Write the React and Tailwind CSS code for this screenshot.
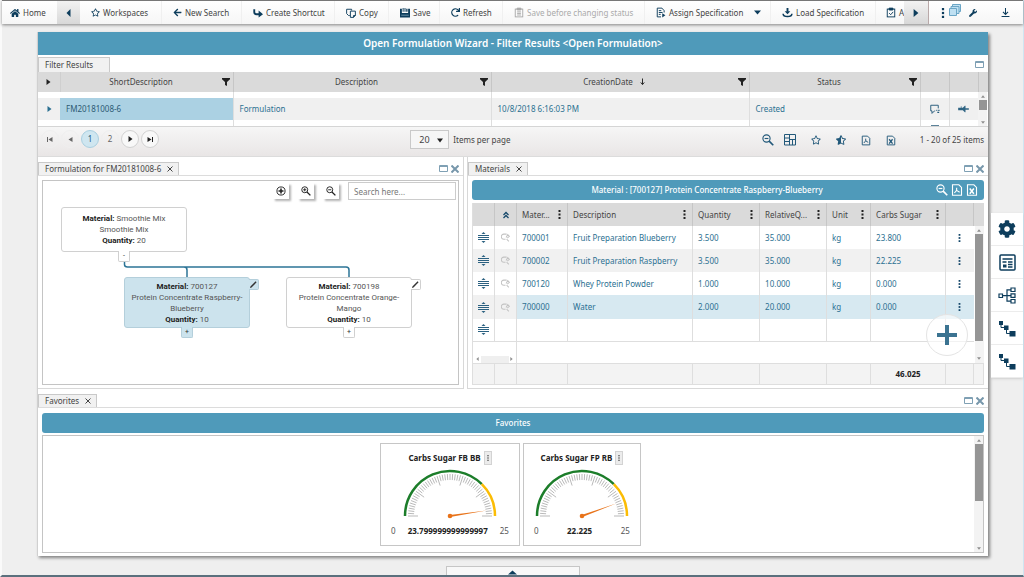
import {
  FaHome,
  FaRegStar,
  FaStarHalfAlt,
  FaArrowLeft,
  FaRedo,
  FaWrench,
  FaCog,
} from "react-icons/fa";

/* ---------- icons ---------- */

const Svg = ({ className = "w-3 h-3", box = "0 0 16 16", children }) => (
  <svg className={className} viewBox={box} fill="none" stroke="currentColor" strokeWidth="1.5">
    {children}
  </svg>
);

const Tri = ({ dir, className = "w-[6px] h-[6px]" }) => {
  const d = {
    up: "M0 9L5 1L10 9Z",
    down: "M0 1L5 9L10 1Z",
    left: "M9 0L1 5L9 10Z",
    right: "M1 0L9 5L1 10Z",
  };
  return (
    <svg className={className} viewBox="0 0 10 10" preserveAspectRatio="none" fill="currentColor">
      <path d={d[dir]} />
    </svg>
  );
};

const ShortcutIcon = () => (
  <Svg className="w-[10px] h-[10px]">
    <path d="M2 2v4.500c0 3 1.500 3.500 3.500 3.500H10" strokeWidth="3" />
    <path d="M9 4l7 6l-7 5z" fill="currentColor" stroke="none" />
  </Svg>
);

const CopyIcon = () => (
  <Svg className="w-[10px] h-[10px]">
    <path d="M6 12H4L1 9V2h8v2" />
    <path d="M7 5h8v7l-3 3H7z M12 15v-3h3" />
  </Svg>
);

const SaveIcon = () => (
  <Svg className="w-[10px] h-[10px]">
    <path d="M0 1h3v7h10V1h3v14H0z" fill="currentColor" stroke="none" />
    <path d="M5 0v6M8 0v6" strokeWidth="1.500" />
    <path d="M10 1h2v5h-2z" fill="currentColor" stroke="none" />
    <path d="M2 11.500h12" stroke="#9fc0d4" strokeWidth="1" />
  </Svg>
);

const ClipIcon = ({ check }) => (
  <Svg className="w-[10px] h-[11px]">
    <rect x="2" y="2.500" width="12" height="12.500" />
    <path d="M5 1h6v3H5z" fill="currentColor" />
    {check ? <path d="M5 9l2.500 2.500L11.500 7" /> : <path d="M5 7h6M5 9.500h6M5 12h6" />}
  </Svg>
);

const AssignIcon = () => (
  <Svg className="w-[10px] h-[11px]">
    <path d="M13 8V5L9.500 1H2v14h6" />
    <path d="M4.500 5h4M4.500 8h6M4.500 11h3" />
    <path d="M10 9l5 3.500l-5 3.500z" fill="currentColor" stroke="none" />
  </Svg>
);

const LoadIcon = () => (
  <Svg className="w-[11px] h-[10px]">
    <path d="M8 0v6" strokeWidth="3" />
    <path d="M3.500 5h9L8 10z" fill="currentColor" stroke="none" />
    <path d="M1 9c0 6 14 6 14 0" strokeWidth="2.500" />
  </Svg>
);

const FilterIcon = () => (
  <svg className="w-[8px] h-[8px] text-[#222]" viewBox="0 0 16 16" fill="currentColor">
    <path d="M0 0h16v2.500L10 8v8l-4-2V8L0 2.500z" />
  </svg>
);

const DotsIcon = ({ className = "w-[3px] h-[9px]" }) => (
  <svg className={className} viewBox="0 0 3 9" fill="currentColor">
    <rect x="0.500" y="0" width="2" height="2" />
    <rect x="0.500" y="3.500" width="2" height="2" />
    <rect x="0.500" y="7" width="2" height="2" />
  </svg>
);

const LensIcon = ({ sign, className = "w-[11px] h-[11px]" }) => (
  <Svg className={className}>
    <circle cx="6" cy="6" r="4.800" />
    <path d="M9.500 9.500l5.500 5.500" strokeWidth="2.200" />
    <path d={sign === "plus" ? "M3.500 6h5M6 3.500v5" : "M3.500 6h5"} />
  </Svg>
);

const GridIcon = () => (
  <svg className="w-[12px] h-[12px]" viewBox="0 0 12 12" fill="none" stroke="currentColor">
    <path d="M0.500 0.500h11v10.500h-11zM5.500 0.500v10.500M0.500 4h5M0.500 7.500h5M5.500 5.500h6M8.500 5.500v5.500" />
  </svg>
);

const DocIcon = ({ kind, className = "w-[10px] h-[11px]" }) => (
  <Svg className={className}>
    <path d="M2 1h8.500L14 4.500V15H2z" />
    {kind === "pdf" ? (
      <path d="M7.500 5v3.500L4.500 12M7.500 8.500l4 2.500" />
    ) : (
      <path d="M5 6l5.500 7M10.500 6L5 13" strokeWidth="2" />
    )}
  </Svg>
);

const WindowIcon = () => (
  <svg className="w-[9px] h-[7px]" viewBox="0 0 9 7" fill="none" stroke="#7fa0b4">
    <path d="M0.500 0.500h8v6h-8zM0 1.500h9" />
  </svg>
);

const CloseIcon = () => (
  <svg className="w-[8px] h-[8px]" viewBox="0 0 8 8" stroke="#7797ab" strokeWidth="2">
    <path d="M0.500 0.500l7 7M7.500 0.500l-7 7" />
  </svg>
);

const RowHandle = () => (
  <svg className="ml-[5px] block w-[11px] h-[11px] text-[#2b6181]" viewBox="0 0 11 11" fill="currentColor">
    <path d="M5.500 0l2 2h-4zM5.500 11l2-2h-4zM0 3h11v1H0zM0 5h11v1H0zM0 7h11v1H0z" />
  </svg>
);

const InspectIcon = () => (
  <svg className="w-[9px] h-[9px] mx-auto" viewBox="0 0 16 16" fill="none" stroke="#c3c3c3" strokeWidth="1.800">
    <path d="M10 2H5a4 4 0 000 9h3M9 8l3-5 3 3-4 3M10 11l4 4" />
  </svg>
);

const CommentIcon = () => (
  <Svg className="w-[11px] h-[10px] mx-auto text-[#22597a]">
    <path d="M14 7V2H2v9h2v4l4-4h1" />
    <path d="M11 10h1.500M14 10h2M12.500 13.500h3" strokeWidth="2" />
  </Svg>
);

const PinIcon = () => (
  <svg className="w-[11px] h-[8px] mx-auto" viewBox="0 0 16 12" fill="#2f6483">
    <path d="M0 4h4v-2l1 0v2h2l3-3h1v10h-1L7 8H0zM11 5h5v2h-5z" />
  </svg>
);

const PencilIcon = () => (
  <svg className="w-[7px] h-[7px]" viewBox="0 0 10 10" fill="#333">
    <path d="M0 10l0.600-2.200L8 0.500l1.400 1.400L2.200 9.300z" />
  </svg>
);

/* ---------- shared pieces ---------- */

function Tab({ label, closable = true, className = "" }) {
  return (
    <div
      className={`flex items-center gap-[5px] border border-b-0 border-[#c9c9c9] bg-[#f1f1f1] pl-[6px] pr-[4px] text-[#444] ${className}`}
    >
      <span>{label}</span>
      {closable && (
        <button aria-label={`Close ${label}`} className="p-px">
          <svg className="w-[6px] h-[6px]" viewBox="0 0 6 6" stroke="#444">
            <path d="M0.500 0.500l5 5M5.500 0.500l-5 5" />
          </svg>
        </button>
      )}
    </div>
  );
}

function WindowButtons() {
  return (
    <div className="ml-auto flex items-center gap-[3px] pr-[4px]">
      <button aria-label="Maximize"><WindowIcon /></button>
      <button aria-label="Close"><CloseIcon /></button>
    </div>
  );
}

function ScrollBar({ thumb }) {
  return (
    <div className="flex h-full w-[9px] flex-col items-center bg-[#f3f3f3] text-[#8f8f8f]">
      <div className="flex h-[8px] items-center"><Tri dir="up" className="w-[4px] h-[3px]" /></div>
      <div className={`w-[8px] bg-[#959595] ${thumb}`} />
      <div className="mt-auto flex h-[8px] items-center"><Tri dir="down" className="w-[4px] h-[3px]" /></div>
    </div>
  );
}

/* ---------- toolbar ---------- */

const tools = [
  { label: "Workspaces", icon: <FaRegStar className="w-[9px] h-[9px]" />, width: "w-[82px]" },
  { label: "New Search", icon: <FaArrowLeft className="w-[9px] h-[9px]" />, width: "w-[80px]" },
  { label: "Create Shortcut", icon: <ShortcutIcon />, width: "w-[93px]" },
  { label: "Copy", icon: <CopyIcon />, width: "w-[54px]" },
  { label: "Save", icon: <SaveIcon />, width: "w-[51px]" },
  { label: "Refresh", icon: <FaRedo className="w-[9px] h-[9px]" />, width: "w-[63px]" },
  { label: "Save before changing status", icon: <ClipIcon />, width: "w-[142px]", disabled: true },
  { label: "Assign Specification", icon: <AssignIcon />, width: "w-[126px]", menu: true },
  { label: "Load Specification", icon: <LoadIcon />, width: "w-[105px]" },
];

function Toolbar() {
  return (
    <header className="relative flex h-[24px] items-stretch border-t border-[#777] bg-linear-to-b from-white to-[#f6f6f6] text-[#444] shadow-[0_1px_3px_rgba(0,0,0,0.45)]">
      <button className="flex w-[55px] shrink-0 items-center gap-[3px] pl-[8px]">
        <FaHome className="w-[10px] h-[10px] text-[#0d3d5c]" />
        Home
      </button>
      <button aria-label="Scroll left" className="flex w-[23px] shrink-0 items-center justify-center bg-linear-to-b from-[#f2f2f2] to-[#d8d8d8] text-[#0d3d5c]">
        <Tri dir="left" className="w-[5px] h-[8px]" />
      </button>
      <nav className="flex min-w-0 flex-1 overflow-hidden">
        {tools.map((t) => (
          <button
            key={t.label}
            disabled={t.disabled}
            className={`flex shrink-0 items-center gap-[3px] whitespace-nowrap border-r border-[#f0f0f0] pl-[11px] ${t.width} ${t.disabled ? "text-[#aaa]" : ""}`}
          >
            <span className={t.disabled ? "text-[#aaa]" : "text-[#0d3d5c]"}>{t.icon}</span>
            {t.label}
            {t.menu && <Tri dir="down" className="ml-auto mr-[9px] w-[7px] h-[5px] text-[#0d3d5c]" />}
          </button>
        ))}
        <button className="flex shrink-0 items-center gap-[3px] whitespace-nowrap pl-[10px]">
          <span className="text-[#0d3d5c]"><ClipIcon check /></span>
          A
        </button>
      </nav>
      <button aria-label="Scroll right" className="flex w-[25px] shrink-0 items-center justify-center border-r border-[#b9a9a9] bg-linear-to-b from-[#f2f2f2] to-[#d8d8d8] text-[#0d3d5c]">
        <Tri dir="right" className="w-[6px] h-[8px]" />
      </button>
      <div className="flex w-[94px] shrink-0 items-center pl-[12px] text-[#0d3d5c]">
        <button aria-label="More"><DotsIcon className="w-[4px] h-[10px]" /></button>
        <button aria-label="Windows" className="ml-[4px] mb-[6px]">
          <svg className="w-[12px] h-[12px]" viewBox="0 0 12 12" fill="#bfe0f2" stroke="#6ba6c6">
            <path d="M3.500 0.500h8v7h-8z" />
            <path d="M2 2.500h8v7H2z" />
            <path d="M0.500 4.500h7v7h-7z" />
          </svg>
        </button>
        <button aria-label="Tools" className="ml-[8px]"><FaWrench className="w-[8px] h-[8px]" /></button>
        <button aria-label="Download" className="ml-auto mr-[13px]">
          <Svg className="w-[9px] h-[11px]">
            <path d="M8 0v11M3.500 7L8 11.500L12.500 7M1 15h14" strokeWidth="1.800" />
          </Svg>
        </button>
      </div>
    </header>
  );
}

/* ---------- filter results ---------- */

const resultCols = ["ShortDescription", "Description", "CreationDate", "Status"];
const resultRow = ["FM20181008-6", "Formulation", "10/8/2018 6:16:03 PM", "Created"];

function FilterResults() {
  return (
    <table className="w-full table-fixed border-collapse">
      <colgroup>
        <col className="w-[22px]" />
        <col className="w-[173px]" />
        <col className="w-[258px]" />
        <col className="w-[258px]" />
        <col className="w-[171px]" />
        <col className="w-[29px]" />
        <col className="w-[29px]" />
        <col className="w-[10px]" />
      </colgroup>
      <thead>
        <tr className="h-[20px] bg-[#dadada] text-[#444]">
          <th className="border-r border-[#cfcfcf] p-0">
            <Tri dir="right" className="mx-auto w-[5px] h-[6px] text-[#222]" />
          </th>
          {resultCols.map((c) => (
            <th key={c} className="border-r border-[#c6c6c6] p-0 font-normal">
              <div className="flex items-center pr-[3px]">
                <span className="flex flex-1 items-center justify-center gap-[6px]">
                  {c}
                  {c === "CreationDate" && (
                    <Svg className="w-[7px] h-[8px] text-[#222]">
                      <path d="M8 0v13M4 9l4 5l4-5" strokeWidth="2.200" />
                    </Svg>
                  )}
                </span>
                <button aria-label={`Filter ${c}`}><FilterIcon /></button>
              </div>
            </th>
          ))}
          <th className="border-r border-[#c6c6c6] p-0" />
          <th className="border-r border-[#c6c6c6] p-0" />
          <th className="p-0" />
        </tr>
      </thead>
      <tbody className="text-[#2b7091]">
        <tr className="h-[6px]">
          <td className="p-0" />
          {resultCols.map((c) => <td key={c} className="border-r border-[#dedede] p-0" />)}
          <td className="border-r border-[#dedede] p-0" />
          <td className="p-0" />
          <td rowSpan={3} className="h-[34px] p-0"><ScrollBar thumb="h-[10px]" /></td>
        </tr>
        <tr className="h-[22px] bg-[#f0f0f0]">
          <td className="p-0"><Tri dir="right" className="mx-auto w-[5px] h-[6px]" /></td>
          {resultRow.map((v, i) => (
            <td
              key={v}
              className={`border-r border-[#dedede] p-0 pl-[6px] ${i === 0 ? "bg-[#abd1e3] text-[#2d5b74]" : ""}`}
            >
              {v}
            </td>
          ))}
          <td className="border-r border-[#dedede] p-0"><CommentIcon /></td>
          <td className="p-0"><PinIcon /></td>
        </tr>
        <tr className="h-[6px]">
          <td className="p-0" />
          {resultCols.map((c) => <td key={c} className="border-r border-[#dedede] p-0" />)}
          <td className="border-r border-[#dedede] p-0 align-bottom">
            <div className="mx-auto h-px w-[8px] bg-[#5c8299]" />
          </td>
          <td className="p-0" />
        </tr>
      </tbody>
    </table>
  );
}

function PageButton({ label, active, bordered, children }) {
  return (
    <button
      aria-label={label}
      className={`flex h-[18px] w-[18px] items-center justify-center rounded-full border ${
        active
          ? "border-[#a9cfe0] bg-[#cfe6f0] text-[#22597a]"
          : bordered
            ? "border-[#d2d2d2] bg-[#f8f8f8] text-[#222]"
            : "border-[#efefef] text-[#666]"
      }`}
    >
      {children}
    </button>
  );
}

function Pager() {
  return (
    <div className="flex h-[30px] items-start border-t border-[#d5d5d5] bg-linear-to-b from-[#f6f6f6] to-[#e9e6e6] pl-[3px] pr-[4px] pt-[3px] text-[#444]">
      <div className="flex gap-[2px]">
        <PageButton label="First page">
          <span className="h-[5px] w-px bg-current" />
          <Tri dir="left" className="w-[5px] h-[5px]" />
        </PageButton>
        <PageButton label="Previous page"><Tri dir="left" className="w-[5px] h-[5px]" /></PageButton>
        <PageButton label="Page 1" active>1</PageButton>
        <PageButton label="Page 2">2</PageButton>
        <PageButton label="Next page" bordered><Tri dir="right" className="w-[5px] h-[6px]" /></PageButton>
        <PageButton label="Last page" bordered>
          <Tri dir="right" className="w-[5px] h-[5px]" />
          <span className="h-[5px] w-px bg-current" />
        </PageButton>
      </div>
      <div className="ml-auto flex items-center gap-[4px]">
        <div className="relative">
          <select
            id="page-size"
            defaultValue="20"
            className="h-[19px] w-[39px] appearance-none border border-[#c9c9c9] bg-[#f6f6f6] pl-[8px] text-[9px]"
          >
            <option>20</option>
            <option>50</option>
          </select>
          <Tri dir="down" className="pointer-events-none absolute right-[6px] top-[8px] w-[6px] h-[5px] text-[#222]" />
        </div>
        <label htmlFor="page-size">Items per page</label>
      </div>
      <div className="ml-auto flex h-[20px] items-center text-[#22597a]">
        <div className="mr-[24px] flex items-center gap-[15px]">
          <div className="flex items-center gap-[10px]">
            <button aria-label="Zoom out"><LensIcon sign="minus" className="w-[12px] h-[12px]" /></button>
            <button aria-label="Layout"><GridIcon /></button>
          </div>
          <button aria-label="Add favorite"><FaRegStar className="w-[10px] h-[10px]" /></button>
          <button aria-label="Favorites"><FaStarHalfAlt className="w-[10px] h-[10px]" /></button>
          <button aria-label="Export PDF"><DocIcon kind="pdf" /></button>
          <button aria-label="Export Excel"><DocIcon kind="xls" /></button>
        </div>
        <span className="text-[#444]">1 - 20 of 25 items</span>
      </div>
    </div>
  );
}

/* ---------- formulation tree ---------- */

function Node({ name, lines, qty, selected, expanded, className }) {
  const tone = selected ? "bg-[#cce3ed] border-[#b4cfdb]" : "bg-white border-[#d0d0d0]";
  return (
    <div
      className={`absolute flex w-[126px] flex-col justify-center rounded-[3px] border text-center font-[Roboto] leading-[11px] text-[#555] ${tone} ${className}`}
    >
      <div><b className="text-[#222]">Material:</b> {name}</div>
      {lines.map((l) => <div key={l} className="whitespace-nowrap">{l}</div>)}
      <div><b className="text-[#222]">Quantity:</b> {qty}</div>
      <button
        aria-label={expanded ? "Collapse" : "Expand"}
        className={`absolute left-[56px] top-full h-[11px] w-[12px] rounded-b-[2px] border border-t-0 text-[7px] leading-[9px] text-[#333] ${tone}`}
      >
        {expanded ? "-" : "+"}
      </button>
      {!expanded && (
        <button
          aria-label={`Edit ${name}`}
          className={`absolute left-full top-px flex h-[11px] w-[10px] items-center justify-center rounded-r-[2px] border border-l-0 ${tone}`}
        >
          <PencilIcon />
        </button>
      )}
    </div>
  );
}

function ToolSquare({ label, children }) {
  return (
    <button
      aria-label={label}
      className="flex h-[16px] w-[16px] items-center justify-center bg-white text-[#222] shadow-[2px_2px_2px_rgba(0,0,0,0.3)]"
    >
      {children}
    </button>
  );
}

function FormulationPanel() {
  return (
    <section className="flex min-w-0 flex-[426_1_0%] flex-col border-r border-b border-[#d8d8d8]">
      <div className="flex h-[19px] items-stretch border-b border-[#dcdcdc] pt-[5px]">
        <Tab label="Formulation for FM20181008-6" />
        <WindowButtons />
      </div>
      <div className="relative mx-[4px] mt-[4px] mb-[3px] h-[205px] overflow-hidden border border-[#c4c4c4] bg-white">
        <div className="flex justify-end gap-[9px] pr-[2px] pt-px">
          <div className="flex gap-[9px] pt-px">
            <ToolSquare label="Fit">
              <Svg className="w-[10px] h-[10px]">
                <circle cx="8" cy="8" r="6.500" />
                <path d="M8 4v8M4 8h8" strokeWidth="2.500" />
              </Svg>
            </ToolSquare>
            <ToolSquare label="Zoom in"><LensIcon sign="plus" className="w-[10px] h-[10px]" /></ToolSquare>
            <ToolSquare label="Zoom out"><LensIcon sign="minus" className="w-[10px] h-[10px]" /></ToolSquare>
          </div>
          <input
            aria-label="Search"
            placeholder="Search here..."
            className="h-[18px] w-[108px] border border-[#ccc] px-[5px] placeholder:text-[#777]"
          />
        </div>
        <svg className="absolute left-0 top-0 h-[203px] w-[320px]" viewBox="0 0 320 203" fill="none" stroke="#2c7496" strokeWidth="1.500">
          <path d="M81.500 80v3.500q0 2.500 3 2.500H303q3 0 3 3V97M141 86q3 0 3 3V97" />
        </svg>
        <Node name="Smoothie Mix" lines={["Smoothie Mix"]} qty={20} expanded className="left-[18px] top-[26px] h-[45px]" />
        <Node name="700127" lines={["Protein Concentrate Raspberry-", "Blueberry"]} qty={10} selected className="left-[81px] top-[96px] h-[51px]" />
        <Node name="700198" lines={["Protein Concentrate Orange-", "Mango"]} qty={10} className="left-[243px] top-[96px] h-[51px]" />
      </div>
    </section>
  );
}

/* ---------- materials ---------- */

const materialCols = ["Mater...", "Description", "Quantity", "RelativeQ...", "Unit", "Carbs Sugar"];
const materials = [
  ["700001", "Fruit Preparation Blueberry", "3.500", "35.000", "kg", "23.800"],
  ["700002", "Fruit Preparation Raspberry", "3.500", "35.000", "kg", "22.225"],
  ["700120", "Whey Protein Powder", "1.000", "10.000", "kg", "0.000"],
  ["700000", "Water", "2.000", "20.000", "kg", "0.000"],
];

const cell = "border-r border-[#dedede] p-0";

function MaterialsTable() {
  return (
    <table className="w-full table-fixed border-collapse border-l border-[#dedede]">
      <colgroup>
        <col className="w-[22px]" />
        <col className="w-[22px]" />
        <col className="w-[51px]" />
        <col className="w-[125px]" />
        <col className="w-[67px]" />
        <col className="w-[67px]" />
        <col className="w-[44px]" />
        <col className="w-[75px]" />
        <col className="w-[28px]" />
        <col className="w-[10px]" />
      </colgroup>
      <thead>
        <tr className="h-[23px] bg-[#dadada] text-[#444]">
          <th className="border-r border-[#c6c6c6] p-0" />
          <th className="border-r border-[#c6c6c6] p-0">
            <Svg className="mx-auto w-[8px] h-[8px] text-[#14476a]">
              <path d="M3 8l5-5l5 5M3 14l5-5l5 5" strokeWidth="2.500" />
            </Svg>
          </th>
          {materialCols.map((c) => (
            <th key={c} className="border-r border-[#c6c6c6] p-0 font-normal">
              <div className="flex items-center justify-between pl-[5px] pr-[6px]">
                {c}
                <button aria-label={`${c} menu`} className="text-[#222]"><DotsIcon /></button>
              </div>
            </th>
          ))}
          <th className="border-r border-[#c6c6c6] p-0" />
          <th className="p-0" />
        </tr>
      </thead>
      <tbody className="text-[#2b7091]">
        {materials.map((m, r) => {
          const hot = r === 3;
          return (
            <tr key={m[0]} className={`h-[23px] ${hot ? "bg-[#d7e9f1]" : r % 2 ? "bg-[#f1f1f1]" : "bg-white"}`}>
              <td className={`${cell} ${hot ? "bg-[#f1f1f1]" : ""}`}><RowHandle /></td>
              <td className={`${cell} ${hot ? "bg-[#f1f1f1]" : ""}`}><InspectIcon /></td>
              {m.map((v, i) => <td key={i} className={`${cell} pl-[5px]`}>{v}</td>)}
              <td className="p-0 text-[#14476a]">
                <button aria-label={`Actions for ${m[1]}`} className="mx-auto block"><DotsIcon className="w-[3px] h-[8px]" /></button>
              </td>
              {r === 0 && (
                <td rowSpan={6} className="h-[137px] bg-white p-0 pl-px"><ScrollBar thumb="h-[107px]" /></td>
              )}
            </tr>
          );
        })}
        <tr className="h-[23px] border-b border-[#dedede]">
          <td className={cell}><RowHandle /></td>
          <td className={cell} />
          {materialCols.map((c) => <td key={c} className={cell} />)}
          <td className="p-0" />
        </tr>
        <tr className="h-[21px]">
          <td colSpan={2} className={`${cell} align-bottom`}>
            <div className="flex h-[7px] items-center justify-between px-[3px] text-[#8f8f8f]">
              <Tri dir="left" className="w-[3px] h-[4px]" />
              <div className="h-full w-[28px] bg-[#efefef]" />
              <Tri dir="right" className="w-[3px] h-[4px]" />
            </div>
          </td>
          <td colSpan={7} className="p-0" />
        </tr>
      </tbody>
      <tfoot>
        <tr className="h-[21px] border-y border-[#dedede] bg-[#f3f3f3]">
          <td className={cell} />
          <td className={cell} />
          {materialCols.map((c) => (
            <td key={c} className={`${cell} text-center font-bold text-[#222]`}>
              {c === "Carbs Sugar" ? "46.025" : ""}
            </td>
          ))}
          <td className={cell} />
          <td className={cell} />
        </tr>
      </tfoot>
    </table>
  );
}

function MaterialsPanel() {
  return (
    <section className="min-w-0 flex-[521_1_0%] border-b border-l border-[#d8d8d8]">
      <div className="flex h-[19px] items-stretch border-b border-[#dcdcdc] pt-[5px]">
        <Tab label="Materials" />
        <WindowButtons />
      </div>
      <div className="relative px-[4px] pt-[4px]">
        <div className="mb-[3px] flex h-[20px] items-center rounded-[3px] bg-[#4f9aba] pr-[6px] font-medium text-white">
          <h2 className="flex-1 pl-[6px] text-center">Material : [700127] Protein Concentrate Raspberry-Blueberry</h2>
          <div className="flex items-center gap-[3px]">
            <button aria-label="Zoom out"><LensIcon sign="minus" className="w-[12px] h-[12px]" /></button>
            <button aria-label="Export PDF"><DocIcon kind="pdf" className="w-[12px] h-[12px]" /></button>
            <button aria-label="Export Excel"><DocIcon kind="xls" className="w-[12px] h-[12px]" /></button>
          </div>
        </div>
        <MaterialsTable />
        <button
          aria-label="Add material"
          className="absolute bottom-[29px] right-[20px] flex h-[42px] w-[42px] items-center justify-center rounded-full border border-[#e4e4e4] bg-white/60 text-[#3b7391]"
        >
          <svg className="h-[20px] w-[20px]" viewBox="0 0 20 20" fill="currentColor">
            <path d="M8 0h4v8h8v4h-8v8H8v-8H0V8h8z" />
          </svg>
        </button>
      </div>
    </section>
  );
}

/* ---------- favorites ---------- */

const point = (deg, r) => {
  const a = (deg * Math.PI) / 180;
  return [48 - r * Math.cos(a), 48 - r * Math.sin(a)];
};

function Gauge({ title, value, max = 25 }) {
  const ticks = Array.from({ length: 51 }, (_, i) => i);
  const angle = (value / max) * 180;
  const [tx, ty] = point(angle, 37);
  const [ax, ay] = point(angle - 90, 1);
  const [bx, by] = point(angle + 90, 1);
  const [gx, gy] = point(135, 45);
  return (
    <div className="flex h-[103px] min-w-[118px] flex-col items-center border border-[#c6c6c6] px-[10px] pt-[7px]">
      <div className="flex items-center gap-[3px] font-bold text-[#222]">
        {title}
        <button aria-label={`${title} menu`} className="flex h-[14px] w-[8px] items-center justify-center border border-[#d3d3d3] bg-[#ececec] text-[#555]">
          <DotsIcon className="w-[2px] h-[6px]" />
        </button>
      </div>
      <svg className="mt-[3px] h-[51px] w-[96px]" viewBox="0 0 96 51">
        {ticks.map((i) => {
          const deg = (i / 50) * 180;
          const [x1, y1] = point(deg, 42);
          const [x2, y2] = point(deg, i % 10 === 0 ? 32 : 36);
          return <path key={i} d={`M${x1} ${y1}L${x2} ${y2}`} stroke="#9b9b9b" strokeWidth="0.700" />;
        })}
        <path d={`M3 48A45 45 0 0 1 ${gx} ${gy}`} fill="none" stroke="#1c7d2a" strokeWidth="2.500" />
        <path d={`M${gx} ${gy}A45 45 0 0 1 93 48`} fill="none" stroke="#fbbc05" strokeWidth="2.500" />
        <path d={`M${ax} ${ay}L${tx} ${ty}L${bx} ${by}Z`} fill="#e8731a" />
        <circle cx="48" cy="48" r="2.300" fill="#e8731a" />
      </svg>
      <div className="mt-[6px] flex w-full justify-between gap-[12px] text-[#555]">
        <span>0</span>
        <b className="text-[#222]">{value}</b>
        <span>{max}</span>
      </div>
    </div>
  );
}

function Favorites() {
  return (
    <section>
      <div className="flex h-[19px] items-stretch border-b border-[#dcdcdc] pt-[5px]">
        <Tab label="Favorites" />
        <WindowButtons />
      </div>
      <div className="px-[4px] pb-[3px] pt-[5px]">
        <h2 className="mb-[2px] h-[20px] rounded-[3px] bg-[#4f9aba] text-center font-medium leading-[20px] text-white">
          Favorites
        </h2>
        <div className="flex h-[118px] border border-[#c4c4c4]">
          <div className="flex flex-1 justify-center gap-[3px] pl-[4px] pt-[7px]">
            <Gauge title="Carbs Sugar FB BB" value={23.799999999999997} />
            <Gauge title="Carbs Sugar FP RB" value={22.225} />
          </div>
          <ScrollBar thumb="h-[57px]" />
        </div>
      </div>
    </section>
  );
}

/* ---------- side rail ---------- */

const BranchIcon = () => (
  <svg className="w-[17px] h-[17px]" viewBox="0 0 17 17" fill="#0d3d5c">
    <path d="M0 1h4v4H0zM5 5.500h4.500V10H5zM10.500 11h6v5.500h-6z" />
    <path d="M2 5v2.500h4M7.500 10v3.500h4" fill="none" stroke="#0d3d5c" />
  </svg>
);

const rail = [
  { label: "Settings", icon: <FaCog className="w-[18px] h-[18px]" /> },
  {
    label: "Details",
    icon: (
      <svg className="w-[17px] h-[17px]" viewBox="0 0 17 17" fill="none" stroke="currentColor" strokeWidth="1.500">
        <rect x="1" y="1" width="15" height="15" rx="1" />
        <path d="M3.500 5h10M3.500 8h4M9 8h4.500M9 10.500h4.500M9 13h4.500" />
        <path d="M4 10.500h3.500v3H4z" fill="currentColor" stroke="none" />
      </svg>
    ),
  },
  {
    label: "Hierarchy",
    icon: (
      <svg className="w-[18px] h-[17px]" viewBox="0 0 18 17" fill="none" stroke="currentColor" strokeWidth="1.200">
        <path d="M1 7h3.500v3.500H1zM13 1h4v3.500h-4zM13 6.800h4v3.500h-4zM13 12.500h4V16h-4z" />
        <path d="M4.500 8.600H13M9 8.600V2.800h4M9 8.600v5.600h4" />
      </svg>
    ),
  },
  { label: "Where used", icon: <BranchIcon /> },
  { label: "Breakdown", icon: <BranchIcon /> },
];

function SideRail() {
  return (
    <aside className="ml-[3px] mt-[181px] w-[32px] shrink-0 self-start bg-white text-[#0d3d5c] shadow-sm">
      {rail.map((r) => (
        <button key={r.label} aria-label={r.label} className="flex h-[33px] w-full items-center justify-center border-b border-[#ececec]">
          {r.icon}
        </button>
      ))}
    </aside>
  );
}

export default function App() {
  return (
    <div className="flex min-h-screen flex-col border-b-2 border-l-2 border-r border-b-[#5b707d] border-l-[#fafafa] border-r-[#cfe6f2] bg-[#efefef] font-['Noto_Sans',sans-serif] text-[8px] leading-[12px]">
      <Toolbar />
      <div className="mt-[8px] flex pl-[35px]">
        <main className="min-w-0 flex-1 border-l border-[#d0d0d0] bg-white shadow-[2px_2px_3px_rgba(0,0,0,0.45)]">
          <h1 className="bg-[#4f9aba] text-center text-[10px] font-semibold leading-[23px] text-white">
            Open Formulation Wizard - Filter Results &lt;Open Formulation&gt;
          </h1>
          <div className="flex h-[17px] items-stretch pt-[2px]">
            <Tab label="Filter Results" closable={false} className="w-[72px]" />
            <button aria-label="Maximize" className="ml-auto mr-[4px]"><WindowIcon /></button>
          </div>
          <FilterResults />
          <Pager />
          <div className="flex gap-[3px] border-t border-[#dcdcdc]">
            <FormulationPanel />
            <MaterialsPanel />
          </div>
          <Favorites />
        </main>
        <SideRail />
      </div>
      <footer className="mt-auto flex justify-center">
        <button aria-label="Expand footer" className="flex h-[9px] w-[134px] items-end justify-center border border-b-0 border-[#c6c6c6] bg-[#f8f8f8] text-[#0d3d5c]">
          <Tri dir="up" className="w-[9px] h-[5px]" />
        </button>
      </footer>
    </div>
  );
}
